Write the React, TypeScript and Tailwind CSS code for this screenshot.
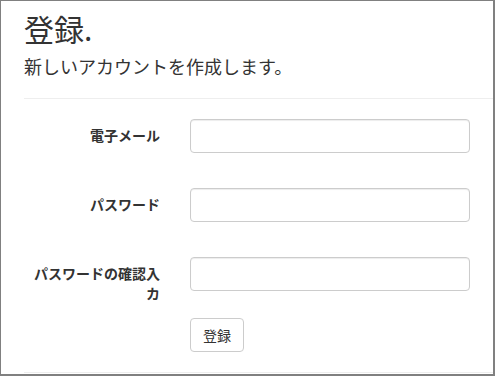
import React from "react";

const font = { fontFamily: '"Noto Sans CJK JP", "Noto Sans", sans-serif' };

function Row({ label, tall }: { label: string; tall?: boolean }) {
  return (
    <div className={`flex items-start ${tall ? "mb-[15px]" : "h-[54px] mb-[15px]"}`}>
      <label className="w-[136px] shrink-0 pt-[6px] text-right text-[14px] leading-5 font-bold text-[#333]">
        {label}
      </label>
      <div className="pl-[30px]">
        <input
          type="text"
          className="block w-[280px] h-[34px] rounded-[4px] border border-[#ccc] bg-white px-3 text-[14px] shadow-[inset_0_1px_1px_rgba(0,0,0,0.075)] outline-none"
        />
      </div>
    </div>
  );
}

export default function App() {
  return (
    <div
      style={font}
      className="w-[495px] h-[376px] overflow-hidden bg-white border-l border-t border-r-2 border-b-2 border-[#808080] text-[#333]"
    >
      <div className="pl-[23px] pt-[11px]">
        <h2 className="text-[30px] leading-[33px] font-normal m-0">登録.</h2>
        <h4 className="mt-[11px] text-[18px] leading-[20px] font-normal">新しいアカウントを作成します。</h4>
        <div className="mt-[22px] h-px bg-[#eee]" />
        <div className="mt-[20px]">
          <Row label="電子メール" />
          <Row label="パスワード" />
          <Row label="パスワードの確認入カ" tall />
          <div className="pl-[166px]">
            <button className="h-[34px] w-[54px] rounded-[4px] border border-[#ccc] bg-white text-[14px] text-[#333]">
              登録
            </button>
          </div>
        </div>
        <div className="mt-[20px] h-px bg-[#eee]" />
      </div>
    </div>
  );
}
